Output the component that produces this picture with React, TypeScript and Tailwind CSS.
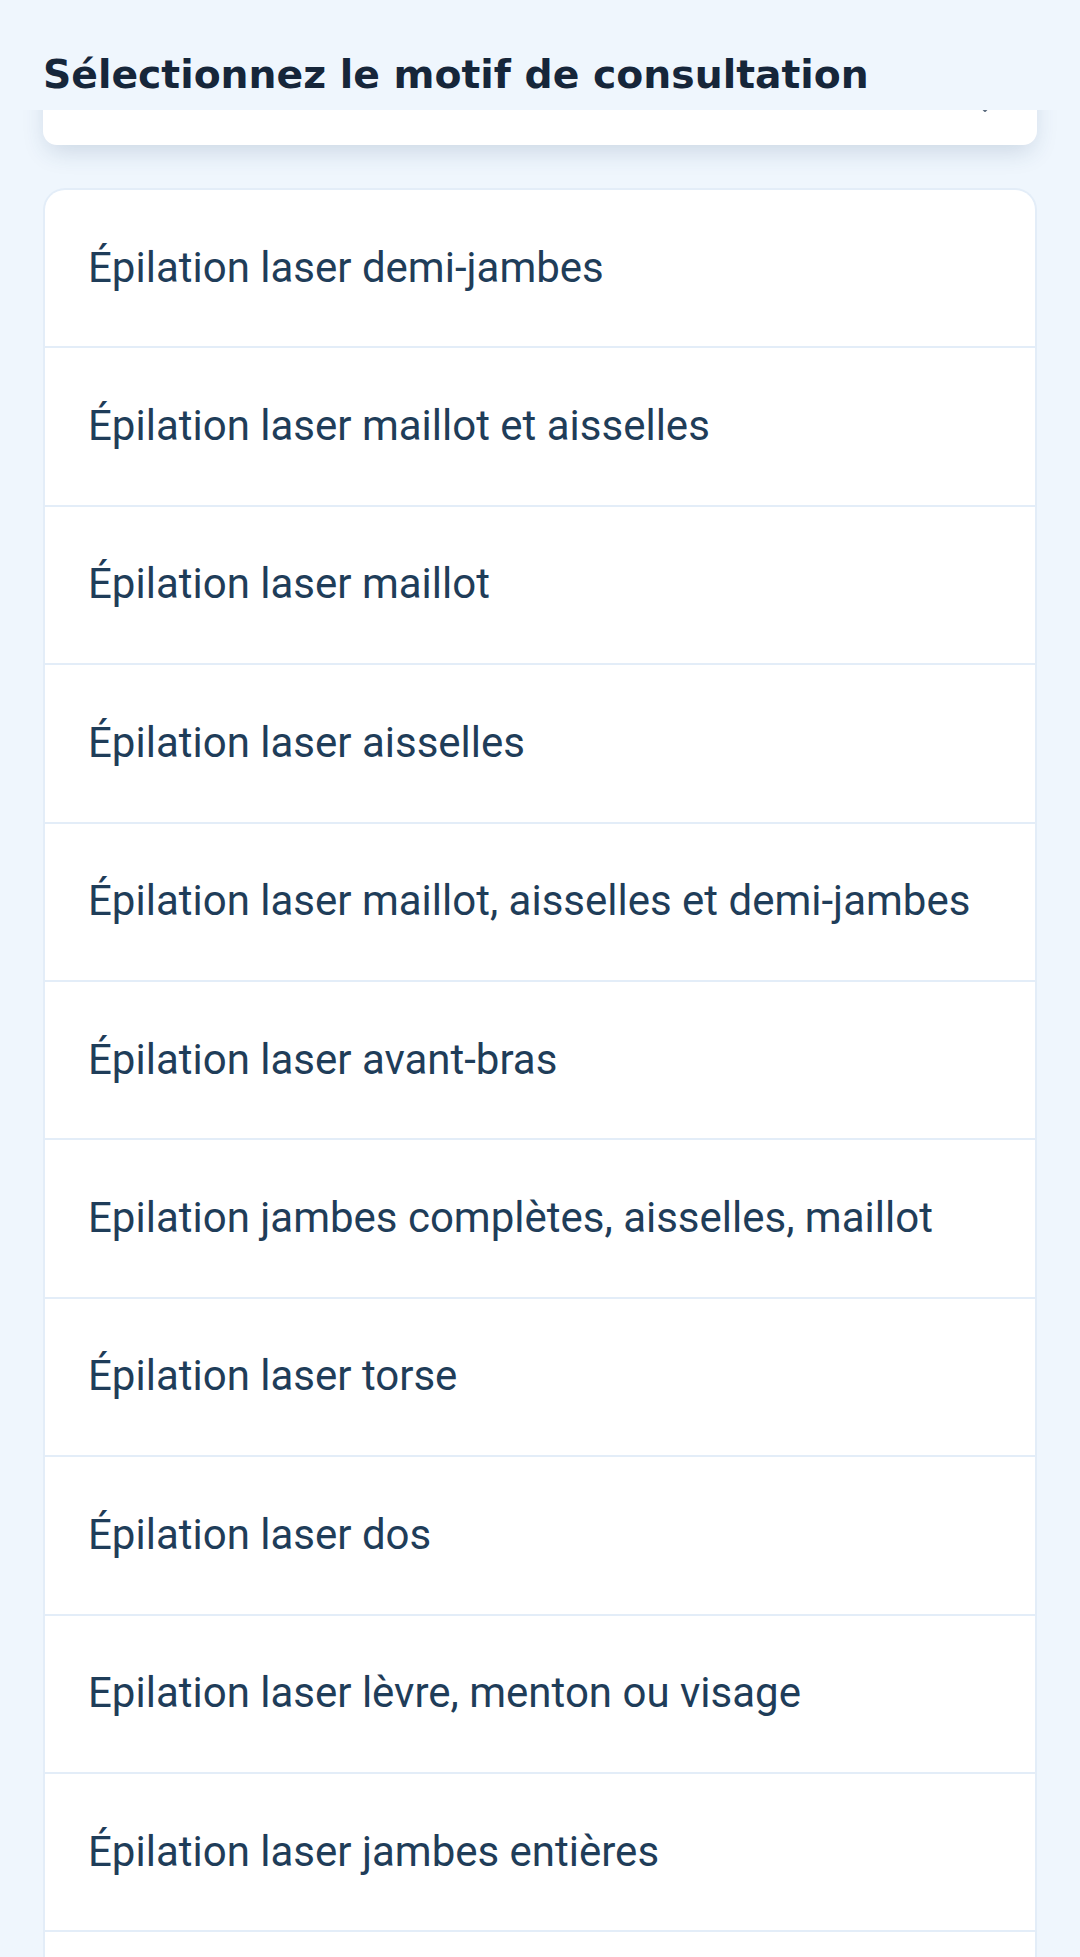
import { ChevronDown } from "lucide-react";

const motifs = [
  "Épilation laser demi-jambes",
  "Épilation laser maillot et aisselles",
  "Épilation laser maillot",
  "Épilation laser aisselles",
  "Épilation laser maillot, aisselles et demi-jambes",
  "Épilation laser avant-bras",
  "Epilation jambes complètes, aisselles, maillot",
  "Épilation laser torse",
  "Épilation laser dos",
  "Epilation laser lèvre, menton ou visage",
  "Épilation laser jambes entières",
];

export default function App() {
  return (
    <div className="min-h-screen bg-[#eff6fd]">
      <header className="relative z-10 h-[110px] bg-[#eff6fd] px-[43px] pt-[53px]">
        <h1 className="whitespace-nowrap font-['DejaVu_Sans',sans-serif] text-[39.3px] font-bold leading-[44px] text-[#16263a]">
          Sélectionnez le motif de consultation
        </h1>
      </header>

      <div className="mx-[43px] -mt-[70px] flex h-[105px] items-start justify-end rounded-b-[14px] bg-white pr-[40px] pt-[56px] shadow-[0_10px_24px_-4px_rgba(40,70,110,0.18)]">
        <ChevronDown className="h-6 w-6 text-[#5b6b7e]" strokeWidth={2} />
      </div>

      <div className="mx-[43px] mt-[43px] overflow-hidden rounded-t-[22px] border-2 border-b-0 border-[#e3edf8] bg-white">
        {motifs.map((m) => (
          <div
            key={m}
            className="flex h-[158.4px] items-center border-b-2 border-[#e3edf8] pb-[2px] pl-[43px] font-['Roboto',sans-serif] text-[42px] text-[#1f3d59]"
          >
            {m}
          </div>
        ))}
        <div className="h-[80px]" />
      </div>
    </div>
  );
}
